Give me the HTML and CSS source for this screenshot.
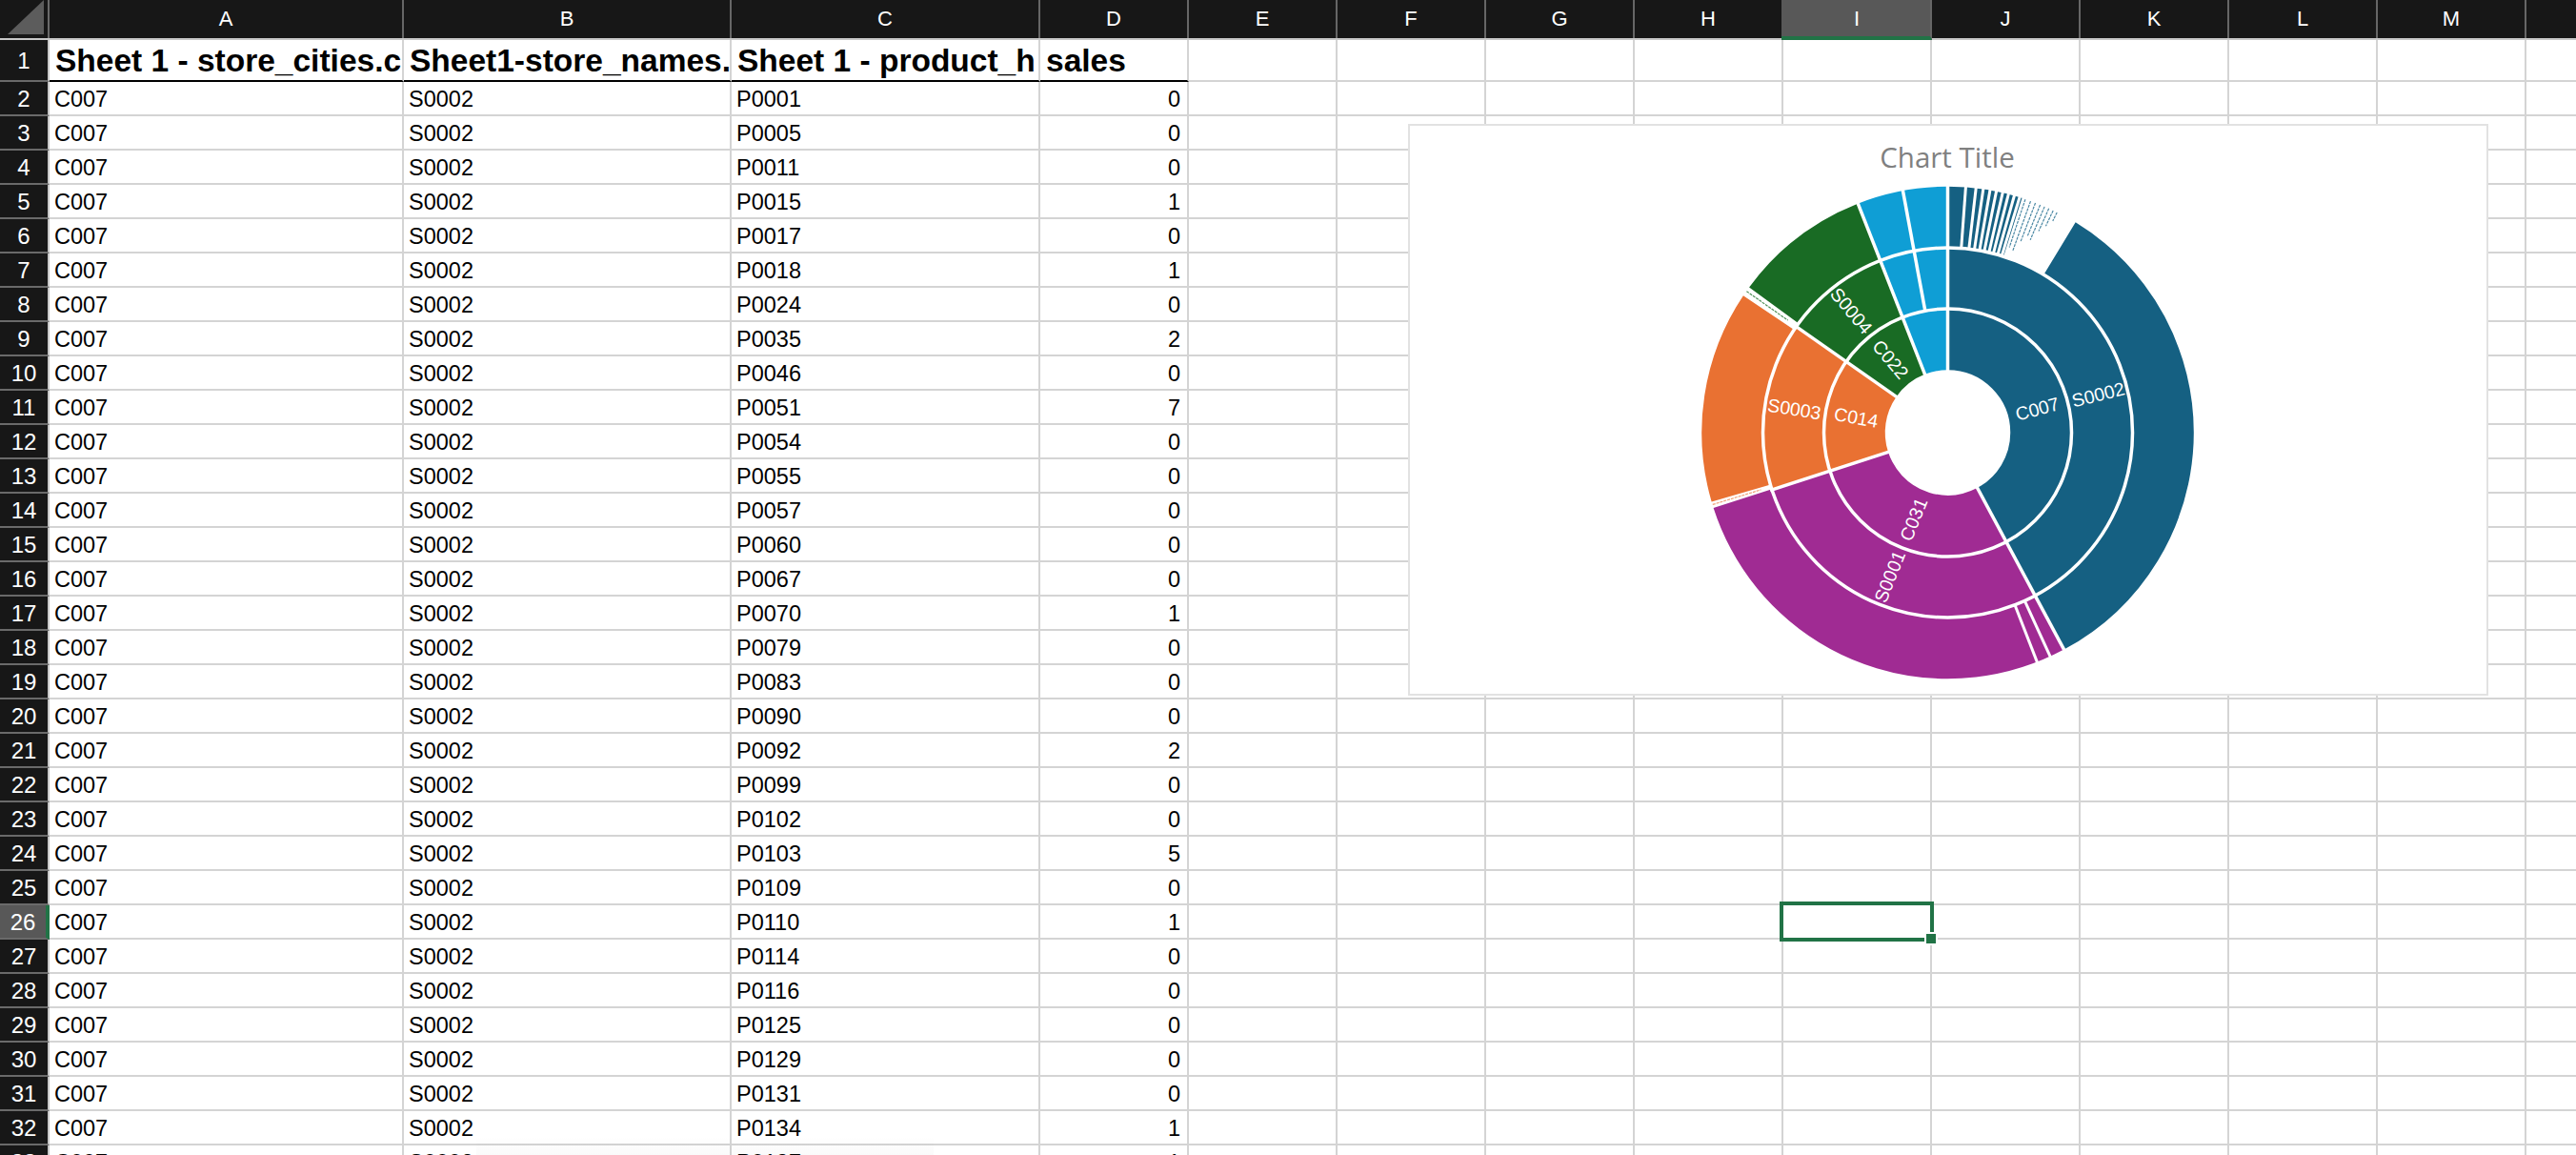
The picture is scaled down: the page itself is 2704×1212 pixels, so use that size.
FILE: index.html
```html
<!DOCTYPE html>
<html lang="en">
<head>
    <meta charset="UTF-8">
    <title>Sheet 1</title>
    <link rel="stylesheet" href="styles.css">
</head>
<body>
<div class="sheet">
    <div class="col-heads">
        <div class="corner"><svg width="50" height="40"><polygon points="8,36 46,36 46,0" fill="#5c5c5c"/></svg></div>
        <div class="col-head w-a">A</div>
        <div class="col-head w-b">B</div>
        <div class="col-head w-c">C</div>
        <div class="col-head">D</div>
        <div class="col-head">E</div>
        <div class="col-head">F</div>
        <div class="col-head">G</div>
        <div class="col-head">H</div>
        <div class="col-head col-selected">I</div>
        <div class="col-head">J</div>
        <div class="col-head">K</div>
        <div class="col-head">L</div>
        <div class="col-head">M</div>
        <div class="col-head col-last"></div>
    </div>

    <div class="sheet-body">
        <table class="cells">
            <colgroup>
                <col class="c-row"><col class="c-a"><col class="c-b"><col class="c-c"><col class="c-d">
            </colgroup>
            <tr class="title-row"><th>1</th><td>Sheet 1 - store_cities.c</td><td>Sheet1-store_names.</td><td>Sheet 1 - product_h</td><td>sales</td></tr>
            <tr><th>2</th><td>C007</td><td>S0002</td><td>P0001</td><td class="num">0</td></tr>
            <tr><th>3</th><td>C007</td><td>S0002</td><td>P0005</td><td class="num">0</td></tr>
            <tr><th>4</th><td>C007</td><td>S0002</td><td>P0011</td><td class="num">0</td></tr>
            <tr><th>5</th><td>C007</td><td>S0002</td><td>P0015</td><td class="num">1</td></tr>
            <tr><th>6</th><td>C007</td><td>S0002</td><td>P0017</td><td class="num">0</td></tr>
            <tr><th>7</th><td>C007</td><td>S0002</td><td>P0018</td><td class="num">1</td></tr>
            <tr><th>8</th><td>C007</td><td>S0002</td><td>P0024</td><td class="num">0</td></tr>
            <tr><th>9</th><td>C007</td><td>S0002</td><td>P0035</td><td class="num">2</td></tr>
            <tr><th>10</th><td>C007</td><td>S0002</td><td>P0046</td><td class="num">0</td></tr>
            <tr><th>11</th><td>C007</td><td>S0002</td><td>P0051</td><td class="num">7</td></tr>
            <tr><th>12</th><td>C007</td><td>S0002</td><td>P0054</td><td class="num">0</td></tr>
            <tr><th>13</th><td>C007</td><td>S0002</td><td>P0055</td><td class="num">0</td></tr>
            <tr><th>14</th><td>C007</td><td>S0002</td><td>P0057</td><td class="num">0</td></tr>
            <tr><th>15</th><td>C007</td><td>S0002</td><td>P0060</td><td class="num">0</td></tr>
            <tr><th>16</th><td>C007</td><td>S0002</td><td>P0067</td><td class="num">0</td></tr>
            <tr><th>17</th><td>C007</td><td>S0002</td><td>P0070</td><td class="num">1</td></tr>
            <tr><th>18</th><td>C007</td><td>S0002</td><td>P0079</td><td class="num">0</td></tr>
            <tr><th>19</th><td>C007</td><td>S0002</td><td>P0083</td><td class="num">0</td></tr>
            <tr><th>20</th><td>C007</td><td>S0002</td><td>P0090</td><td class="num">0</td></tr>
            <tr><th>21</th><td>C007</td><td>S0002</td><td>P0092</td><td class="num">2</td></tr>
            <tr><th>22</th><td>C007</td><td>S0002</td><td>P0099</td><td class="num">0</td></tr>
            <tr><th>23</th><td>C007</td><td>S0002</td><td>P0102</td><td class="num">0</td></tr>
            <tr><th>24</th><td>C007</td><td>S0002</td><td>P0103</td><td class="num">5</td></tr>
            <tr><th>25</th><td>C007</td><td>S0002</td><td>P0109</td><td class="num">0</td></tr>
            <tr><th class="row-selected">26</th><td>C007</td><td>S0002</td><td>P0110</td><td class="num">1</td></tr>
            <tr><th>27</th><td>C007</td><td>S0002</td><td>P0114</td><td class="num">0</td></tr>
            <tr><th>28</th><td>C007</td><td>S0002</td><td>P0116</td><td class="num">0</td></tr>
            <tr><th>29</th><td>C007</td><td>S0002</td><td>P0125</td><td class="num">0</td></tr>
            <tr><th>30</th><td>C007</td><td>S0002</td><td>P0129</td><td class="num">0</td></tr>
            <tr><th>31</th><td>C007</td><td>S0002</td><td>P0131</td><td class="num">0</td></tr>
            <tr><th>32</th><td>C007</td><td>S0002</td><td>P0134</td><td class="num">1</td></tr>
            <tr><th>33</th><td>C007</td><td>S0002</td><td>P0137</td><td class="num">1</td></tr>
        </table>
        <div class="empty-area">
            <div class="empty-first"></div>
            <div class="empty-rows"></div>
        </div>
    </div>

    <div class="chart">
        <svg width="1130" height="596" viewBox="0 0 1130 596">
            <text class="chart-title" x="564" y="44">Chart Title</text>
            <g transform="translate(564.5 322)">
                <!-- inner ring: cities -->
                <g class="ring ring-1">
                    <circle class="teal" r="98.25" pathLength="360" stroke-dasharray="152 360" transform="rotate(-90)"/>
                    <circle class="purple" r="98.25" pathLength="360" stroke-dasharray="100 360" transform="rotate(62)"/>
                    <circle class="orange" r="98.25" pathLength="360" stroke-dasharray="53 360" transform="rotate(162)"/>
                    <circle class="green" r="98.25" pathLength="360" stroke-dasharray="34 360" transform="rotate(215)"/>
                    <circle class="blue" r="98.25" pathLength="360" stroke-dasharray="21 360" transform="rotate(249)"/>
                </g>
                <!-- middle ring: stores -->
                <g class="ring">
                    <circle class="teal" r="162" pathLength="360" stroke-dasharray="152 360" transform="rotate(-90)"/>
                    <circle class="purple" r="162" pathLength="360" stroke-dasharray="100 360" transform="rotate(62)"/>
                    <circle class="orange" r="162" pathLength="360" stroke-dasharray="53 360" transform="rotate(162)"/>
                    <circle class="green" r="162" pathLength="360" stroke-dasharray="34 360" transform="rotate(215)"/>
                    <circle class="blue" r="162" pathLength="360" stroke-dasharray="21 360" transform="rotate(249)"/>
                </g>
                <!-- outer ring: products -->
                <g class="ring">
                    <circle class="teal" r="226" pathLength="360" stroke-dasharray="17.6 360" transform="rotate(-90)"/>
                    <circle class="teal" r="226" pathLength="360" stroke-dasharray="120.5 360" transform="rotate(-58.7)"/>
                    <circle class="purple" r="226" pathLength="360" stroke-dasharray="100.4 360" transform="rotate(61.8)"/>
                    <circle class="orange" r="226" pathLength="360" stroke-dasharray="50.1 360" transform="rotate(163.7)"/>
                    <circle class="green" r="226" pathLength="360" stroke-dasharray="32.2 360" transform="rotate(216.2)"/>
                    <circle class="blue" r="226" pathLength="360" stroke-dasharray="21.6 360" transform="rotate(248.4)"/>
                </g>

                <circle class="ring-line" r="130"/>
                <circle class="ring-line" r="194"/>

                <!-- thin slices of the outer ring -->
                <line class="sliver sliver-teal" y1="-258" y2="-205" transform="rotate(18.4)"/>
                <line class="sliver sliver-teal" y1="-258" y2="-203" transform="rotate(19.7)"/>
                <line class="sliver sliver-teal" y1="-258" y2="-215" transform="rotate(20.9)"/>
                <line class="sliver sliver-teal" y1="-258" y2="-222" transform="rotate(22.1)"/>
                <line class="sliver sliver-teal" y1="-258" y2="-220" transform="rotate(23.2)"/>
                <line class="sliver sliver-teal" y1="-258" y2="-232" transform="rotate(24.3)"/>
                <line class="sliver sliver-teal" y1="-258" y2="-240" transform="rotate(25.4)"/>
                <line class="sliver sliver-teal" y1="-258" y2="-248" transform="rotate(26.4)"/>
                <line class="sliver sliver-orange" y1="-258" y2="-205" transform="rotate(253)"/>
                <line class="sliver sliver-green" y1="-258" y2="-205" transform="rotate(305.1)"/>

                <!-- white cuts between slices -->
                <line class="cut" y1="-60" y2="-262"/>
                <line class="cut" y1="-60" y2="-262" transform="rotate(151.8)"/>
                <line class="cut" y1="-60" y2="-196" transform="rotate(252)"/>
                <line class="cut" y1="-60" y2="-196" transform="rotate(305)"/>
                <line class="cut" y1="-60" y2="-262" transform="rotate(338.6)"/>
                <line class="cut" y1="-130" y2="-262" transform="rotate(349.5)"/>
                <line class="cut cut-thin" y1="-194" y2="-262" transform="rotate(155.4)"/>
                <line class="cut cut-thin" y1="-194" y2="-262" transform="rotate(158.7)"/>
                <line class="cut cut-thin" y1="-194" y2="-262" transform="rotate(4.2)"/>
                <line class="cut cut-thin" y1="-194" y2="-262" transform="rotate(6.6)"/>
                <line class="cut cut-thin" y1="-194" y2="-262" transform="rotate(8.3)"/>
                <line class="cut cut-thin" y1="-194" y2="-262" transform="rotate(9.9)"/>
                <line class="cut cut-thin" y1="-194" y2="-262" transform="rotate(11.4)"/>
                <line class="cut cut-thin" y1="-194" y2="-262" transform="rotate(12.9)"/>
                <line class="cut cut-thin" y1="-194" y2="-262" transform="rotate(14.3)"/>
                <line class="cut cut-thin" y1="-194" y2="-262" transform="rotate(15.7)"/>
                <line class="cut cut-thin" y1="-194" y2="-262" transform="rotate(17)"/>

                <text class="slice-label" transform="translate(94 -25) rotate(-15)">C007</text>
                <text class="slice-label" transform="translate(158 -40) rotate(-14)">S0002</text>
                <text class="slice-label" transform="translate(-36 91) rotate(-68)">C031</text>
                <text class="slice-label" transform="translate(-61 151) rotate(-68)">S0001</text>
                <text class="slice-label" transform="translate(-96 -16) rotate(10)">C014</text>
                <text class="slice-label" transform="translate(-161 -25) rotate(9)">S0003</text>
                <text class="slice-label" transform="translate(-60 -77) rotate(50)">C022</text>
                <text class="slice-label" transform="translate(-101 -128) rotate(50)">S0004</text>
            </g>
        </svg>
    </div>

    <div class="active-cell"><span class="fill-handle"></span></div>
    <div class="dock-shade"></div>
</div>
</body>
</html>
```

FILE: styles.css
```css
html, body {
    margin: 0;
    padding: 0;
    background-color: #fff;
}
.sheet {
    position: relative;
    width: 2704px;
    height: 1212px;
    overflow: hidden;
    font-family: "Liberation Sans", Arial, sans-serif;
    color: #000;
}

/* column letters */
.col-heads {
    display: flex;
    height: 40px;
    background-color: #171717;
    border-bottom: 2px solid #c8c8c8;
}
.corner {
    width: 50px;
    flex: none;
    border-right: 2px solid #6a6a6a;
}
.corner svg {
    display: block;
}
.col-head {
    width: 154px;
    flex: none;
    border-right: 2px solid #666;
    color: #fff;
    font-size: 22px;
    line-height: 40px;
    text-align: center;
}
.w-a { width: 370px; }
.w-b { width: 342px; }
.w-c { width: 322px; }
.col-selected {
    background-color: #585858;
    height: 38px;
    border-bottom: 4px solid #217346;
    margin-left: -2px;
    padding-left: 2px;
    margin-bottom: -2px;
}
.col-last {
    border-right: none;
}

/* cells */
.sheet-body {
    display: flex;
}
.cells {
    flex: none;
    width: 1248px;
    table-layout: fixed;
    border-collapse: separate;
    border-spacing: 0;
    font-size: 23.5px;
}
.c-row { width: 52px; }
.c-a { width: 372px; }
.c-b { width: 344px; }
.c-c { width: 324px; }
.c-d { width: 156px; }
.cells th {
    height: 34px;
    padding: 2px 0 0;
    box-sizing: border-box;
    background-color: #171717;
    border-bottom: 2px solid #6a6a6a;
    border-right: 2px solid #c8c8c8;
    color: #fff;
    font-weight: normal;
    font-size: 24px;
    text-align: center;
}
.cells td {
    height: 36px;
    box-sizing: border-box;
    padding: 2px 4px 0 5px;
    border-right: 2px solid #d4d4d4;
    border-bottom: 2px solid #d4d4d4;
    white-space: nowrap;
    overflow: hidden;
}
.cells .title-row th,
.cells .title-row td {
    height: 44px;
}
.cells .title-row td {
    border-bottom-color: #000;
    font-size: 33.5px;
    font-weight: bold;
    padding-left: 6px;
    padding-right: 0;
}
.cells .num {
    text-align: right;
    padding-right: 7px;
}
.cells .row-selected {
    background-color: #585858;
    border-right: 4px solid #217346;
}

/* the columns E and up have no data, only grid lines */
.empty-area {
    flex: 1;
    background-image: linear-gradient(to left, #d4d4d4 2px, transparent 2px);
    background-size: 156px 100%;
}
.empty-first {
    height: 42px;
    border-bottom: 2px solid #d4d4d4;
}
.empty-rows {
    height: 1126px;
    background-image: linear-gradient(to top, #d4d4d4 2px, transparent 2px);
    background-size: 100% 36px;
}

/* chart floats over the grid */
.chart {
    position: absolute;
    left: 1478px;
    top: 130px;
    width: 1130px;
    height: 596px;
    background-color: #fff;
    border: 2px solid #e2e2e2;
}
.chart svg {
    display: block;
}
.chart-title {
    font-family: "Open Sans", sans-serif;
    font-size: 29.5px;
    fill: #808080;
    text-anchor: middle;
}
.ring circle {
    fill: none;
    stroke-width: 64.5px;
}
.ring-1 circle {
    stroke-width: 65px;
}
.teal { stroke: #156082; }
.purple { stroke: #a02b93; }
.orange { stroke: #e97132; }
.green { stroke: #196b24; }
.blue { stroke: #0f9ed5; }
.ring-line {
    fill: none;
    stroke: #fff;
    stroke-width: 3.5px;
}
.cut {
    stroke: #fff;
    stroke-width: 3.5px;
}
.cut-thin {
    stroke-width: 3px;
}
.sliver {
    stroke-width: 1.2px;
    stroke-dasharray: 3 1;
}
.sliver-teal { stroke: #4a87a3; }
.sliver-orange { stroke: #f0a078; }
.sliver-green { stroke: #4f9058; }
.slice-label {
    font-size: 19.5px;
    fill: #fff;
    text-anchor: middle;
    dominant-baseline: central;
}

/* selected cell I26 */
.active-cell {
    position: absolute;
    left: 1868px;
    top: 946px;
    width: 154px;
    height: 34px;
    border: 4px solid #217346;
}
.fill-handle {
    position: absolute;
    right: -8px;
    bottom: -8px;
    width: 10px;
    height: 10px;
    background-color: #217346;
    border: 2px solid #fff;
}

.dock-shade {
    position: absolute;
    left: 500px;
    top: 1192px;
    width: 480px;
    height: 20px;
    background: linear-gradient(to bottom, rgba(0, 0, 0, 0), rgba(0, 0, 0, 0.02));
}
```
